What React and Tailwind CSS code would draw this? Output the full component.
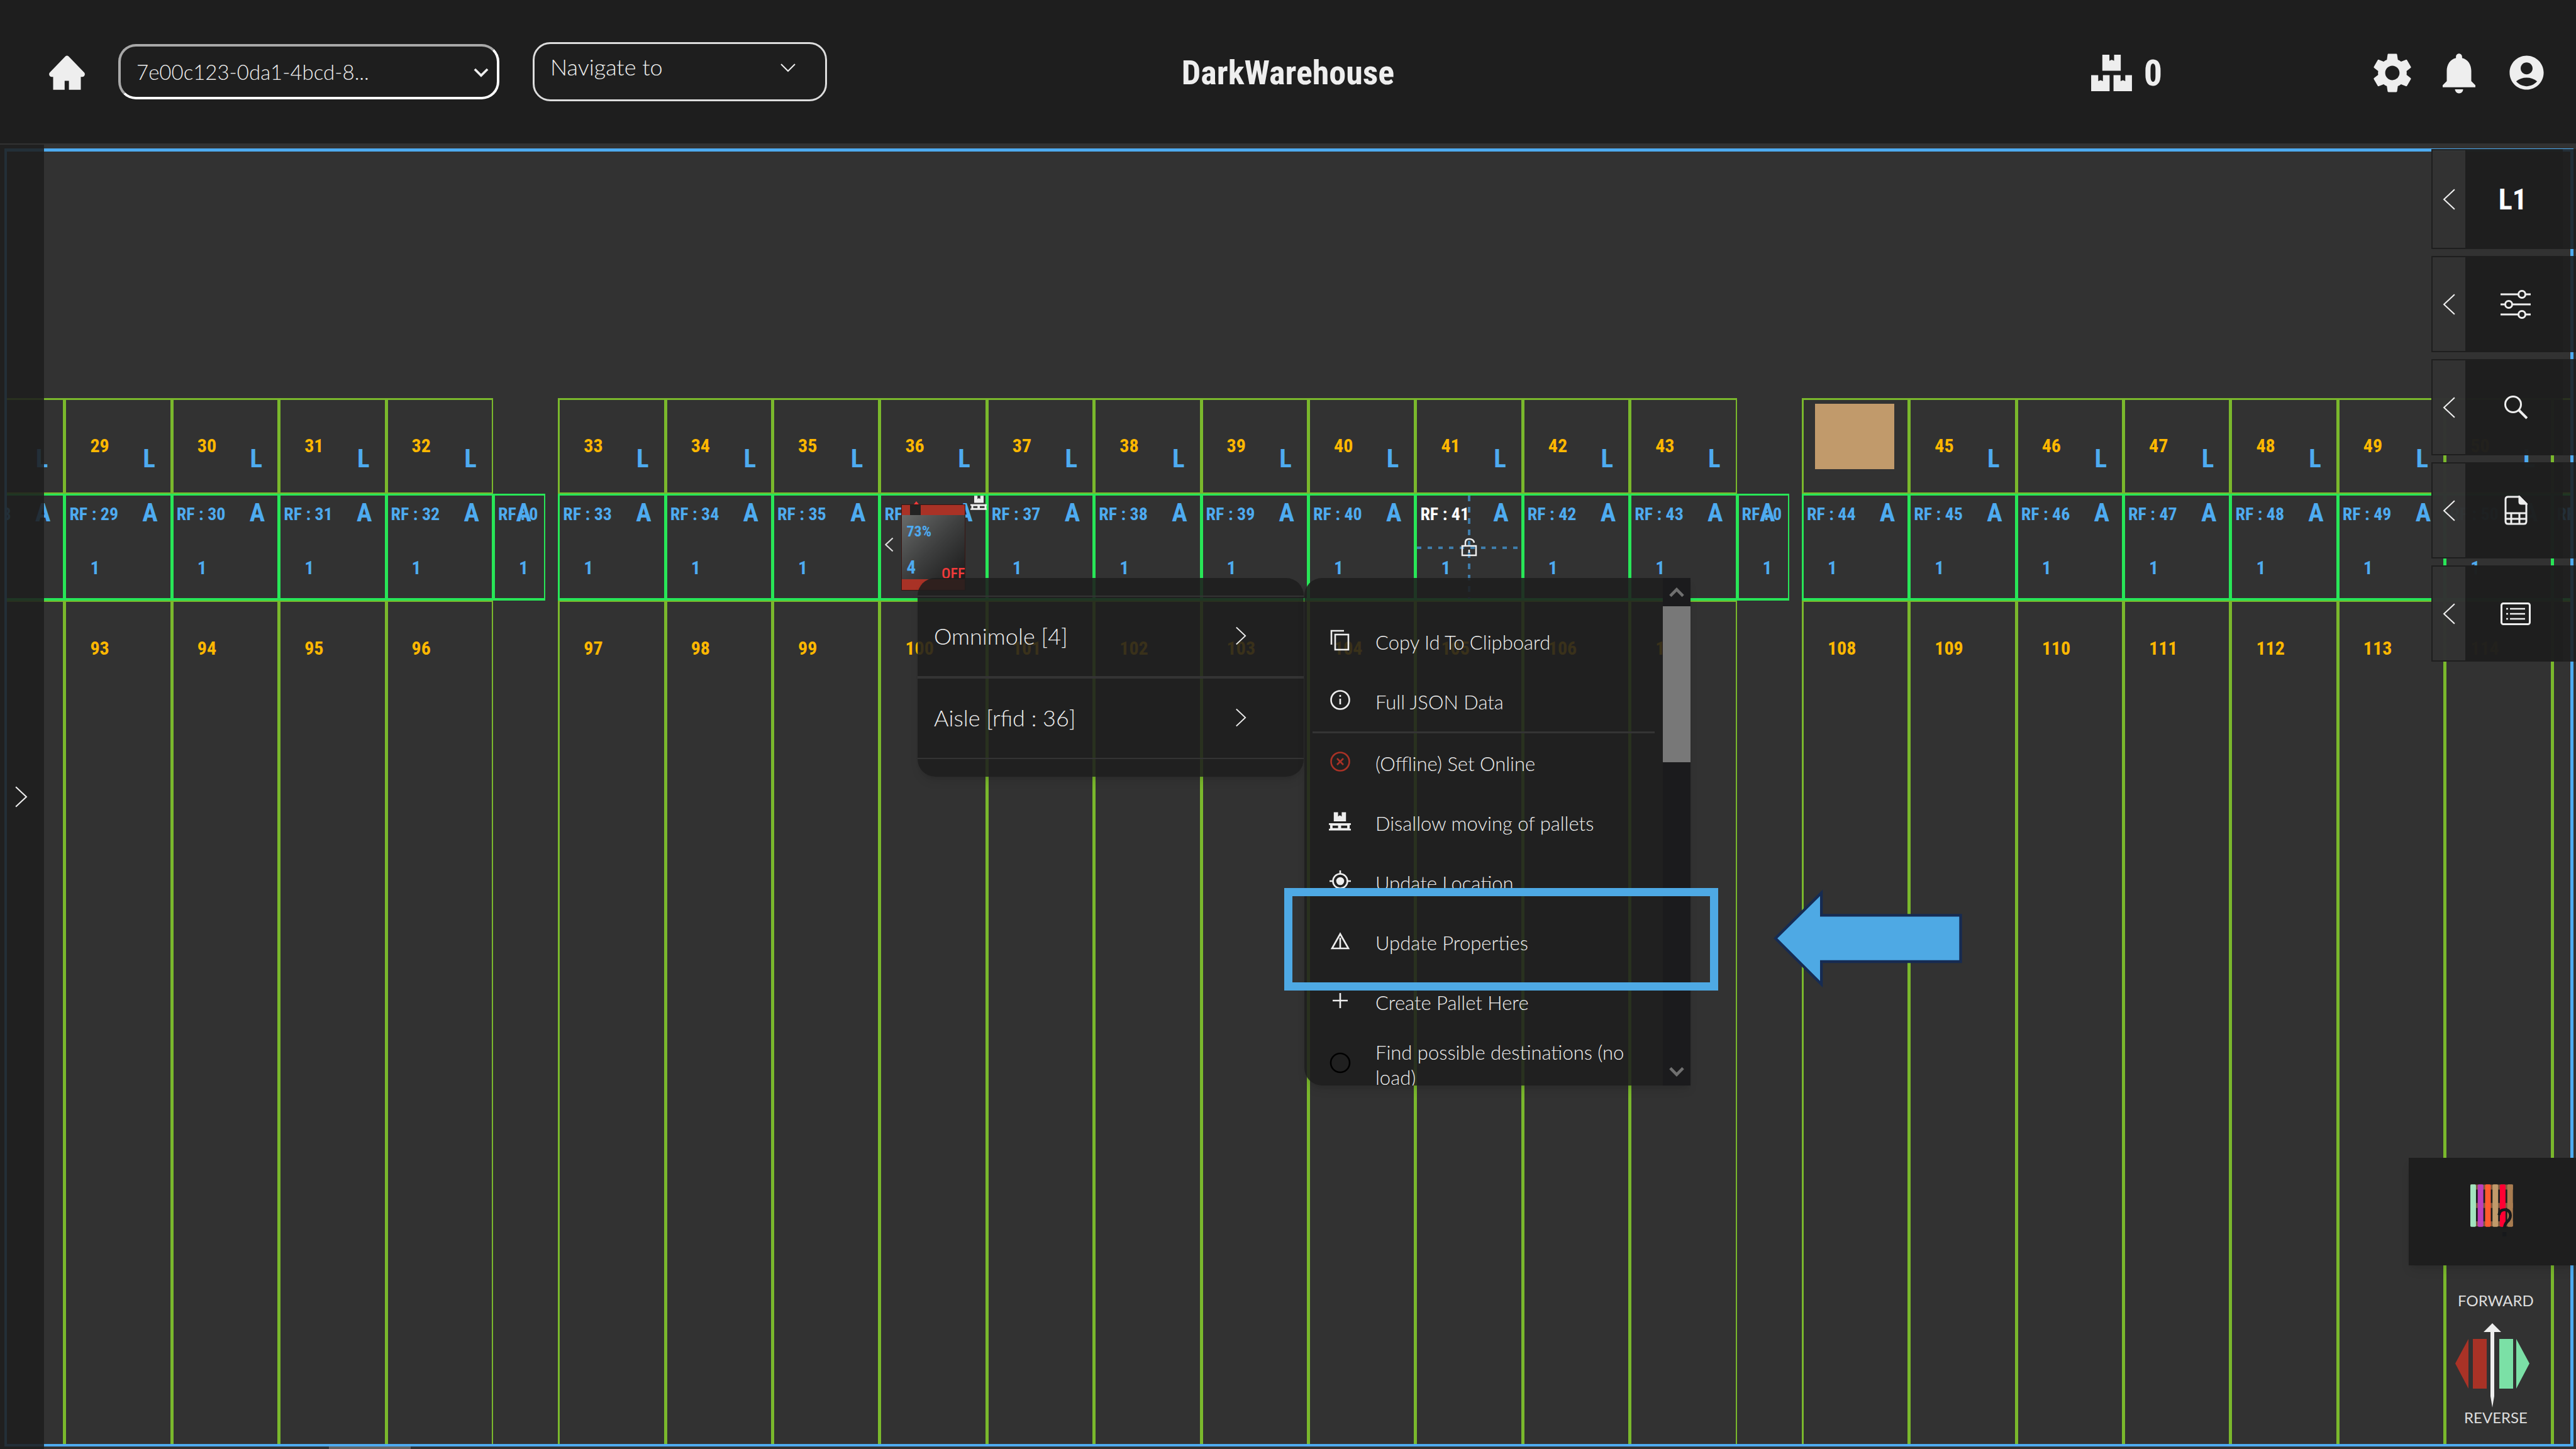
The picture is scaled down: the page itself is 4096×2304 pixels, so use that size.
import React from "react";
import { MdSettings, MdNotifications, MdAccountCircle } from "react-icons/md";

const BOLD = "font-['Liberation_Sans_Narrow','Roboto_Condensed',Lato,sans-serif] font-bold";

const COLUMNS = [
  ...[28, 29, 30, 31, 32].map((n) => ({ n })),
  { end: true },
  ...[33, 34, 35, 36, 37, 38, 39, 40, 41, 42, 43].map((n) => ({ n })),
  { end: true },
  ...[44, 45, 46, 47, 48, 49, 50, 51].map((n) => ({ n })),
];

function Chevron({ className, dir = "right", stroke = 2 }) {
  const d = { right: "M2 2 L18 17 L2 32", left: "M18 2 L2 17 L18 32" }[dir];
  return (
    <svg viewBox="0 0 20 34" className={className} fill="none" stroke="currentColor" strokeWidth={stroke} aria-hidden="true">
      <path d={d} />
    </svg>
  );
}

function DownChevron({ className, stroke = 3 }) {
  return (
    <svg viewBox="0 0 26 16" className={className} fill="none" stroke="currentColor" strokeWidth={stroke} aria-hidden="true">
      <path d="M2 2 L13 13 L24 2" />
    </svg>
  );
}

function HomeIcon({ className }) {
  return (
    <svg viewBox="0 0 184 176" className={className} fill="#eeeeee" aria-hidden="true">
      <path d="M84 4 Q92 -3 100 4 L181 88 Q187 96 180 106 Q176 110 170 110 L163 110 L163 176 L102 176 L102 130 L80 130 L80 176 L21 176 L21 110 L14 110 Q8 110 4 106 Q-3 96 3 88 Z" />
    </svg>
  );
}

function BoxesIcon({ className }) {
  const box = "h36 v31 l12 -5 l12 5 v-31 h34 v82 h-94 z";
  return (
    <svg viewBox="0 0 208 186" className={className} fill="#eeeeee" aria-hidden="true">
      <path d={`M57 0 ${box}`} />
      <path d={`M0 104 ${box}`} />
      <path d={`M114 104 ${box}`} />
    </svg>
  );
}

function PalletIcon({ className }) {
  return (
    <svg viewBox="0 0 36 30" className={className} fill="#eeeeee" aria-hidden="true">
      <path d="M8 0 h7 v7 l3 -2 l3 2 v-7 h7 v15 h-20 z" />
      <path fillRule="evenodd" d="M0 18 h36 v3 h-2 v6 h2 v3 h-36 v-3 h2 v-6 h-2 z M6 22 v4 h9 v-4 z M20 22 v4 h10 v-4 z" />
    </svg>
  );
}

function LockIcon({ className }) {
  return (
    <svg viewBox="0 0 26 30" className={className} fill="none" stroke="#eeeeee" strokeWidth="2.5" aria-hidden="true">
      <rect x="2" y="13" width="22" height="15" />
      <path d="M7 13 V8 Q7 2 13 2 Q20 2 21 8" />
      <path d="M13 19 V24" />
    </svg>
  );
}

function Robot() {
  return (
    <div>
      <span className="absolute left-[6px] top-[66px] text-[#dddddd]">
        <Chevron dir="left" stroke={3} className="h-[24px] w-[14px]" />
      </span>
      <div className="absolute left-[32px] top-[14px] flex h-[137px] w-[102px] flex-col border border-[#3a1512] bg-[#a93226]">
        <span className="absolute left-[13px] top-0 h-[16px] w-[17px] bg-[#232323]" />
        <svg viewBox="0 0 8 5" className="absolute left-[19px] -top-[6px] h-[5px] w-[8px]" fill="#f23a3a" aria-hidden="true">
          <path d="M4 0 L8 5 H0 Z" />
        </svg>
        <div className="mt-[16px] flex h-[102px] flex-col justify-between bg-linear-to-br from-[#696b6a] via-[#3e3f3f] to-[#1c1c1c] pt-[14px] pl-[7px]">
          <span className={`${BOLD} text-[24px] leading-none text-[#4eabf0]`}>73%</span>
          <span className="flex items-end justify-between">
            <span className={`${BOLD} mb-[4px] text-[29px] leading-none text-[#4eabf0]`}>4</span>
            <span className="pt-[10px] font-['Liberation_Sans_Narrow','Roboto_Condensed',Lato,sans-serif] text-[24px] leading-[18px] font-medium text-[#f23a3a]">OFF</span>
          </span>
        </div>
      </div>
      <PalletIcon className="absolute -right-[3px] top-0 h-[23px] w-[27px]" />
    </div>
  );
}

function LockedMarks() {
  return (
    <div>
      <svg viewBox="0 0 165 166" className="absolute left-0 top-0 h-[166px] w-[165px]" fill="none" stroke="#3f7dab" aria-hidden="true">
        <path d="M83 0 V164" strokeWidth="4" strokeDasharray="9 9" />
        <path d="M0 83 H164" strokeWidth="4" strokeDasharray="7 10" />
      </svg>
      <LockIcon className="absolute left-[70px] top-[67px] h-[30px] w-[26px]" />
    </div>
  );
}

function UpperCell({ n }) {
  if (!n) return <div />;
  return (
    <div className="relative border-t-3 border-r-2 border-b-2 border-l-3 border-[#7ab82c]">
      {n === 44 ? (
        <div className="mt-[6px] ml-[18px] h-[104px] w-[126px] bg-[#c19a6b]" />
      ) : (
        <>
          <span className={`${BOLD} block pt-[58px] pl-[38px] text-[30px] leading-none text-[#ffb800]`}>{n}</span>
          <span className={`${BOLD} absolute right-[24px] top-[73px] text-[41px] leading-none text-[#4eabf0]`}>L</span>
        </>
      )}
    </div>
  );
}

function AisleCell({ n }) {
  return (
    <div className={`${n ? "" : "w-[83px]"} relative border-t-3 border-r-2 border-b-4 border-l-3 border-[#28e657]`}>
      <span className={`${BOLD} ${n === 41 ? "text-white" : "text-[#4eabf0]"} block pt-[16px] pl-[5px] text-[28px] leading-none whitespace-nowrap`}>
        RF : {n || 0}
      </span>
      <span className={`${BOLD} absolute right-[20px] top-[7px] text-[41px] leading-none text-[#4eabf0]`}>A</span>
      <span className={`${BOLD} block pt-[56px] pl-[38px] text-[30px] leading-none text-[#4eabf0]`}>1</span>
      {n === 36 && <Robot />}
      {n === 41 && <LockedMarks />}
    </div>
  );
}

function LowerCell({ n }) {
  if (!n) return <div />;
  return (
    <div className="border-t-2 border-r-2 border-l-3 border-[#7ab82c]">
      <span className={`${BOLD} block pt-[59px] pl-[38px] text-[30px] leading-none text-[#ffb800]`}>{n + 64}</span>
    </div>
  );
}

function WarehouseMap() {
  return (
    <section aria-label="Warehouse map" className="flex flex-1 flex-col overflow-hidden border-4 border-t-5 border-r-5 border-[#4eabf0] pt-[392px]">
      <div className="-mr-[141px] -ml-[79px] grid flex-1 grid-cols-[repeat(5,183fr)_111fr_repeat(11,183fr)_111fr_repeat(8,183fr)] grid-rows-[152px_170px_1fr]">
        {COLUMNS.map((c, i) => <UpperCell key={i} n={c.n} />)}
        {COLUMNS.map((c, i) => <AisleCell key={i} n={c.n} />)}
        {COLUMNS.map((c, i) => <LowerCell key={i} n={c.n} />)}
      </div>
    </section>
  );
}

function Header() {
  return (
    <header className="grid h-[228px] shrink-0 grid-cols-[1fr_auto_1fr] items-center bg-[#1e1e1e] pt-[3px] text-[#eeeeee]">
      <div className="flex items-center pl-[78px]">
        <button type="button" aria-label="Home">
          <HomeIcon className="h-[55px] w-[57px]" />
        </button>
        <div className="relative mb-[3px] ml-[53px]">
          <select
            aria-label="Warehouse id"
            className="block h-[88px] w-[606px] appearance-none rounded-[28px] border-4 border-t-[#a9a9a9] border-r-white border-b-white border-l-[#a9a9a9] bg-[#1e1e1e] pt-[2px] pl-[25px] text-[33px] font-light"
          >
            <option>7e00c123-0da1-4bcd-8...</option>
          </select>
          <DownChevron stroke={4} className="pointer-events-none absolute top-[38px] right-[17px] h-[15px] w-[24px]" />
        </div>
        <div className="relative mb-[4px] ml-[53px]">
          <select
            aria-label="Navigate to"
            className="block h-[94px] w-[468px] appearance-none rounded-[28px] border-3 border-[#dddddd] bg-[#1e1e1e] pb-[16px] pl-[25px] text-[36px] font-light"
          >
            <option>Navigate to</option>
          </select>
          <DownChevron stroke={2} className="pointer-events-none absolute top-[33px] right-[49px] h-[16px] w-[26px]" />
        </div>
      </div>
      <h1 className={`${BOLD} text-[54px] leading-none`}>DarkWarehouse</h1>
      <div className="flex items-center justify-end pr-[46px]">
        <BoxesIcon className="h-[58px] w-[65px]" />
        <span className={`${BOLD} mr-[328px] ml-[19px] text-[58px] leading-none`}>0</span>
        <button type="button" aria-label="Settings">
          <MdSettings className="h-[76px] w-[76px]" />
        </button>
        <button type="button" aria-label="Notifications" className="ml-[29px]">
          <MdNotifications className="h-[78px] w-[78px]" />
        </button>
        <button type="button" aria-label="Account" className="ml-[36px]">
          <MdAccountCircle className="h-[65px] w-[65px]" />
        </button>
      </div>
    </header>
  );
}

function SlidersIcon() {
  return (
    <svg viewBox="0 0 48 46" className="h-[46px] w-[48px]" fill="#1e1e1e" stroke="#eeeeee" strokeWidth="3" aria-hidden="true">
      <path d="M0 7 H48 M0 23 H48 M0 39 H48" />
      <circle cx="34" cy="7" r="5.5" />
      <circle cx="13" cy="23" r="5.5" />
      <circle cx="34" cy="39" r="5.5" />
    </svg>
  );
}

function SearchIcon() {
  return (
    <svg viewBox="0 0 38 38" className="h-[38px] w-[38px]" fill="none" stroke="#eeeeee" strokeWidth="3" aria-hidden="true">
      <circle cx="15" cy="14" r="12.5" />
      <path d="M24 23 L37 36" strokeWidth="4" />
    </svg>
  );
}

function SheetIcon() {
  return (
    <svg viewBox="0 0 37 47" className="h-[47px] w-[37px]" fill="none" stroke="#eeeeee" strokeWidth="3" aria-hidden="true">
      <path d="M6 2 H24 L35 13 V41 Q35 45 31 45 H6 Q2 45 2 41 V6 Q2 2 6 2 Z" />
      <path d="M24 2 V10 Q24 13 27 13 H35 Z" fill="#eeeeee" />
      <path d="M2 28 H35 M2 37 H35 M11 28 V45 M24 28 V45" />
    </svg>
  );
}

function ListIcon() {
  return (
    <svg viewBox="0 0 48 36" className="h-[36px] w-[48px]" fill="none" stroke="#eeeeee" strokeWidth="3" aria-hidden="true">
      <rect x="1.5" y="1.5" width="45" height="33" rx="3" />
      <path d="M15 10 H39 M15 18 H39 M15 26 H39 M9 10 H12 M9 18 H12 M9 26 H12" strokeWidth="2.5" />
    </svg>
  );
}

const PANELS = [
  { label: "Level L1", body: <span className={`${BOLD} mr-[9px] text-[46px] leading-none text-white`}>L1</span> },
  { label: "Filters", body: <SlidersIcon /> },
  { label: "Search", body: <SearchIcon /> },
  { label: "Reports", body: <SheetIcon /> },
  { label: "List", body: <ListIcon /> },
];

function RightPanels() {
  return (
    <nav aria-label="Tool panels" className="absolute top-[9px] right-0 flex w-[230px] flex-col gap-[11px]">
      {PANELS.map((p, i) => (
        <button key={p.label} type="button" aria-label={p.label} className={`${i === 0 ? "h-[159px]" : "h-[153px]"} flex`}>
          <span className="flex h-full w-[56px] items-center justify-center border-2 border-[#1e1e1e] bg-[#323232]/98 text-[#eeeeee]">
            <Chevron dir="left" className="h-[36px] w-[21px]" />
          </span>
          <span className="flex h-full flex-1 items-center justify-center bg-[#1e1e1e]/98 pl-[3px]">{p.body}</span>
          <span className="h-full w-[21px] bg-[#1e1e1e]/88" />
        </button>
      ))}
    </nav>
  );
}

function PalletLegend() {
  const slats = ["#a3e4bf", "#bd3fbd", "#ff5a2f", "#c19a6b", "#ff0033", "#a97c50"];
  return (
    <button type="button" aria-label="Pallet types" className="flex h-[171px] w-[266px] items-start bg-[#1e1e1e] pt-[42px] pl-[98px] shadow-lg">
      <svg viewBox="0 0 220 270" className="h-[84px] w-[68px]" aria-hidden="true">
        <path d="M0 14 H220 M0 108 H220 M0 203 H220" stroke="#7d573c" strokeWidth="26" />
        {slats.map((c, i) => (
          <rect key={c} x={i * 38} y="0" width="29" height="218" rx="6" fill={c} />
        ))}
        <path d="M147 158 Q150 130 176 130 Q205 130 206 160 Q206 178 190 192 Q178 202 175 225" fill="none" stroke="#17191c" strokeWidth="15" />
        <rect x="165" y="245" width="20" height="22" fill="#17191c" />
      </svg>
    </button>
  );
}

function DirectionLegend() {
  return (
    <figure className="mt-[40px] flex flex-col items-center pl-[11px] text-[24px] leading-[32px] font-normal text-[#dddddd]">
      <figcaption>FORWARD</figcaption>
      <svg viewBox="0 0 118 134" className="mt-[20px] mr-[12px] h-[134px] w-[118px]" aria-hidden="true">
        <path d="M21 25 V104 L0 64 Z M28 25 H50 V104 H28 Z" fill="#a93226" />
        <path d="M70 25 H92 V104 H70 Z M97 25 V104 L118 64 Z" fill="#7be0a6" />
        <path d="M59 0 L73 14 H62 V116 L59 134 L56 116 V14 H45 Z" fill="#eeeeee" />
      </svg>
      <span>REVERSE</span>
    </figure>
  );
}

function ObjectMenu() {
  return (
    <ul className="absolute top-[691px] left-[1459px] w-[614px] rounded-[28px] bg-[#1e1e1e]/88 py-[28px] text-[36px] font-light text-[#eeeeee] shadow-lg">
      {["Omnimole [4]", "Aisle [rfid : 36]"].map((t) => (
        <li key={t} className="border-t-2 border-b-2 border-[#343434]">
          <button type="button" className="flex h-[126px] w-full items-center justify-between pr-[91px] pb-[2px] pl-[26px]">
            {t}
            <Chevron className="h-[34px] w-[18px]" />
          </button>
        </li>
      ))}
    </ul>
  );
}

function MenuIcon({ name }) {
  if (name === "pallet") return <PalletIcon className="h-[30px] w-[35px]" />;
  const shapes = {
    copy: (
      <>
        <rect x="9" y="8" width="21" height="24" />
        <path d="M3 24 V2 H23" />
      </>
    ),
    info: (
      <>
        <circle cx="17" cy="17" r="14.5" />
        <path d="M17 15 V24 M17 9 V12" />
      </>
    ),
    offline: (
      <>
        <circle cx="17" cy="17" r="14.5" stroke="#a93226" />
        <path d="M12 12 L22 22 M22 12 L12 22" stroke="#a93226" />
      </>
    ),
    target: (
      <>
        <circle cx="17" cy="17" r="11.5" />
        <circle cx="17" cy="17" r="5" fill="#eeeeee" />
        <path d="M17 0 V6 M17 28 V34 M0 17 H6 M28 17 H34" />
      </>
    ),
    warning: (
      <>
        <path d="M17 6 L30 29 H4 Z" />
        <path d="M17 12 V29" />
      </>
    ),
    plus: <path d="M17 5 V29 M5 17 H29" />,
    circle: <circle cx="17" cy="17" r="15" stroke="#000000" />,
  };
  return (
    <svg viewBox="0 0 34 34" className="h-[34px] w-[34px]" fill="none" stroke="#eeeeee" strokeWidth="2.6" aria-hidden="true">
      {shapes[name]}
    </svg>
  );
}

const ACTIONS = [
  ["copy", "Copy Id To Clipboard"],
  ["info", "Full JSON Data"],
  ["offline", "(Offline) Set Online"],
  ["pallet", "Disallow moving of pallets"],
  ["target", "Update Location"],
  ["warning", "Update Properties"],
  ["plus", "Create Pallet Here"],
  ["circle", "Find possible destinations (no load)"],
];

function ActionMenu() {
  return (
    <div className="absolute top-[691px] left-[2074px] flex h-[807px] w-[614px] overflow-hidden rounded-l-[28px] bg-[#1e1e1e]/88 text-[#eeeeee] shadow-lg">
      <ul className="flex-1 pt-[54px] pr-[13px] pl-[13px] text-[31px] leading-[40px] font-light">
        {ACTIONS.map(([icon, text], i) => (
          <li key={text} className={i === 1 ? "border-b-3 border-[#343434]" : ""}>
            <button type="button" className={`${i === 7 ? "min-h-[104px]" : "min-h-[95px]"} flex w-full items-center pl-[26px] text-left`}>
              <span className="mb-[6px] flex w-[35px] shrink-0 justify-center">
                <MenuIcon name={icon} />
              </span>
              <span className="ml-[39px]">{text}</span>
            </button>
          </li>
        ))}
      </ul>
      <div className="flex w-[44px] flex-col items-center bg-[#1b1b1d] text-[#707070]">
        <span className="flex h-[45px] items-center">
          <DownChevron stroke={5} className="h-[16px] w-[24px] rotate-180" />
        </span>
        <span className="h-[248px] w-full bg-[#787878]" />
        <span className="mt-auto flex h-[45px] items-center">
          <DownChevron stroke={5} className="h-[16px] w-[24px]" />
        </span>
      </div>
    </div>
  );
}

export default function App() {
  return (
    <div className="flex h-screen flex-col overflow-hidden bg-[#323232] font-[Lato,sans-serif]">
      <Header />
      <main className="relative flex flex-1 flex-col pt-[8px] pr-[4px] pb-[4px] pl-[7px]">
        <WarehouseMap />
        <button
          type="button"
          aria-label="Open left panel"
          className="absolute top-[2px] bottom-0 left-0 flex w-[70px] items-center justify-center bg-[#1e1e1e]/88 pr-[3px] text-[#eeeeee]"
        >
          <Chevron stroke={2} className="h-[38px] w-[21px]" />
        </button>
        <RightPanels />
        <div className="absolute right-0 bottom-0 flex h-[463px] w-[266px] flex-col">
          <PalletLegend />
          <DirectionLegend />
        </div>
        <ObjectMenu />
        <ActionMenu />
        <div className="absolute top-[1184px] left-[2042px] h-[163px] w-[690px] border-13 border-[#4ea9e4]" />
        <svg viewBox="88 57 965 505" className="absolute top-[1186px] left-[2820px] h-[157px] w-[300px]" aria-hidden="true">
          <path d="M98 308 L333 75 V190 H1045 V427 H333 V543 Z" fill="#4ea9e4" stroke="#162b52" strokeWidth="14" />
        </svg>
        <div className="absolute bottom-0 left-[523px] h-[4px] w-[130px] bg-[#666666]" />
      </main>
    </div>
  );
}
